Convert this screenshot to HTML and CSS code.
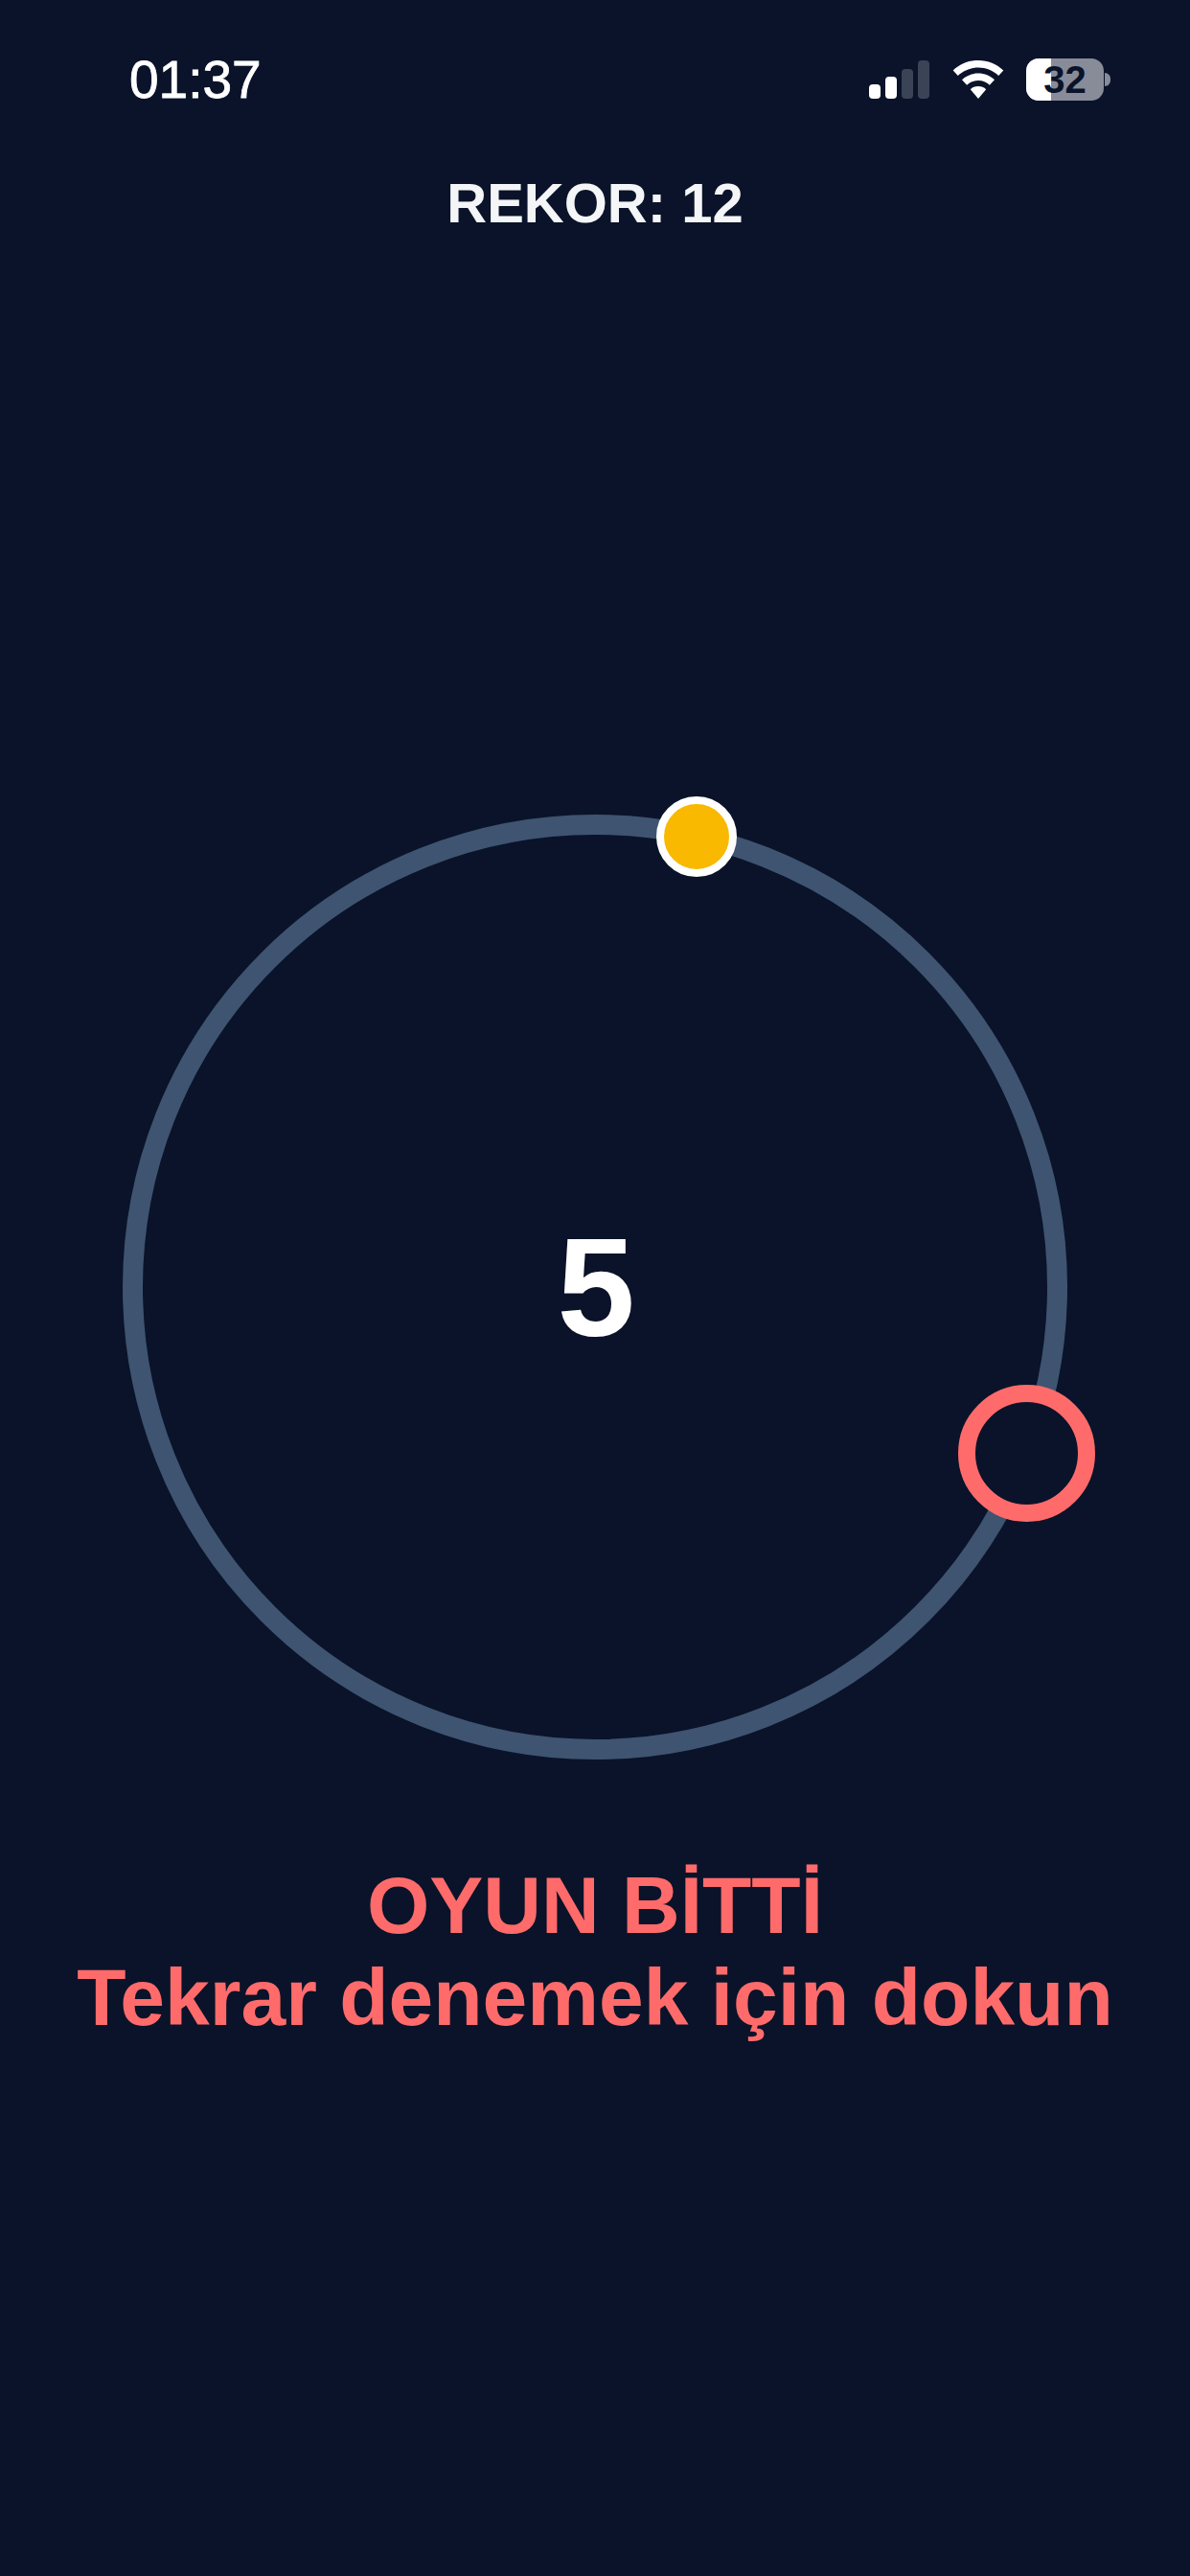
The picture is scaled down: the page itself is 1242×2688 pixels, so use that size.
FILE: index.html
```html
<!DOCTYPE html>
<html lang="tr">
<head>
<meta charset="utf-8">
<title>Oyun</title>
<link rel="stylesheet" href="styles.css">
</head>
<body>
<main class="screen">
  <header class="status">
    <span class="time">01:37</span>
    <div class="indicators">
      <div class="signal">
        <span class="bar bar-1"></span>
        <span class="bar bar-2"></span>
        <span class="bar bar-3 off"></span>
        <span class="bar bar-4 off"></span>
      </div>
      <svg class="wifi" viewBox="0 0 54 40" aria-hidden="true">
        <path d="M27 0C16.800 0 7.600 4 .7 10.500L5.800 16C11.300 10.800 18.800 7.600 27 7.600S42.700 10.800 48.200 16L53.300 10.500C46.400 4 37.200 0 27 0Z"/>
        <path d="M27 13.500C20.400 13.500 14.500 16 10 20.200L15.100 25.700C18.200 22.800 22.400 21 27 21S35.800 22.800 38.900 25.700L44 20.200C39.500 16 33.600 13.500 27 13.500Z"/>
        <path d="M27 27C23.800 27 21 28.200 18.800 30.200L27 40L35.200 30.200C33 28.200 30.200 27 27 27Z"/>
      </svg>
      <div class="battery">
        <div class="battery-body"><span class="battery-fill"></span><span class="battery-text">32</span></div>
        <span class="battery-nub"></span>
      </div>
    </div>
  </header>
  <div class="record">REKOR: 12</div>
  <section class="game">
    <div class="track"></div>
    <div class="score">5</div>
    <div class="ball"></div>
    <div class="target"></div>
  </section>
  <div class="message">
    <div>OYUN BİTTİ</div>
    <div>Tekrar denemek için dokun</div>
  </div>
</main>
</body>
</html>
```
FILE: styles.css
```css
* { box-sizing: border-box; }
html, body { margin: 0; padding: 0; background: #0a1329; }
.screen {
  width: 1242px;
  height: 2688px;
  background: #0a1329;
  font-family: "Liberation Sans", Arial, sans-serif;
  color: #fff;
  overflow: hidden;
}
.status {
  display: flex;
  justify-content: space-between;
  align-items: center;
  height: 62px;
  margin-top: 52px;
  padding: 0 83px 0 135px;
}
.time { font-size: 55px; line-height: 62px; -webkit-text-stroke: 0.8px #fff; }
.indicators { display: flex; align-items: flex-end; height: 44px; }
.signal { display: flex; align-items: flex-end; gap: 5px; height: 40px; margin: 0 24px 2px 0; }
.bar { width: 12px; background: #fff; border-radius: 4px; }
.bar.off { background: #3b4356; }
.bar-1 { height: 15px; }
.bar-2 { height: 23px; }
.bar-3 { height: 31px; }
.bar-4 { height: 40px; }
.wifi { width: 54px; height: 40px; fill: #fff; margin: 0 23px 2px 0; display: block; }
.battery { display: flex; align-items: center; }
.battery-body {
  position: relative;
  width: 81px;
  height: 44px;
  border-radius: 13px;
  background: #888b98;
  overflow: hidden;
}
.battery-fill { position: absolute; left: 0; top: 0; bottom: 0; width: 26px; background: #fff; }
.battery-text {
  position: absolute;
  inset: 0;
  text-align: center;
  font-size: 40px;
  line-height: 44px;
  font-weight: 700;
  color: #0a1329;
}
.battery-nub {
  width: 6px;
  height: 14px;
  margin-left: 1px;
  background: #888b98;
  border-radius: 0 7px 7px 0;
}
.record {
  margin-top: 65px;
  text-align: center;
  font-size: 58px;
  line-height: 66px;
  font-weight: 700;
  color: #f4f5f7;
  filter: blur(0.6px);
}
.game {
  position: relative;
  width: 986px;
  height: 986px;
  margin: 605px 0 0 128px;
  filter: blur(0.6px);
}
.track {
  width: 100%;
  height: 100%;
  border: 21px solid #3e5470;
  border-radius: 50%;
}
.score {
  position: absolute;
  left: 2px;
  right: 0;
  top: 0;
  height: 100%;
  padding-top: 2px;
  display: flex;
  align-items: center;
  justify-content: center;
  font-size: 146px;
  font-weight: 700;
}
.ball {
  position: absolute;
  left: 557px;
  top: -19px;
  width: 84px;
  height: 84px;
  border: 8px solid #fff;
  border-radius: 50%;
  background: #f9b900;
}
.target {
  position: absolute;
  left: 872px;
  top: 595px;
  width: 143px;
  height: 143px;
  border: 18px solid #ff6b6b;
  border-radius: 50%;
  background: #0a1329;
}
.message {
  margin-top: 104px;
  text-align: center;
  font-size: 84px;
  line-height: 96px;
  font-weight: 700;
  color: #ff6b6b;
  filter: blur(0.6px);
}
```
